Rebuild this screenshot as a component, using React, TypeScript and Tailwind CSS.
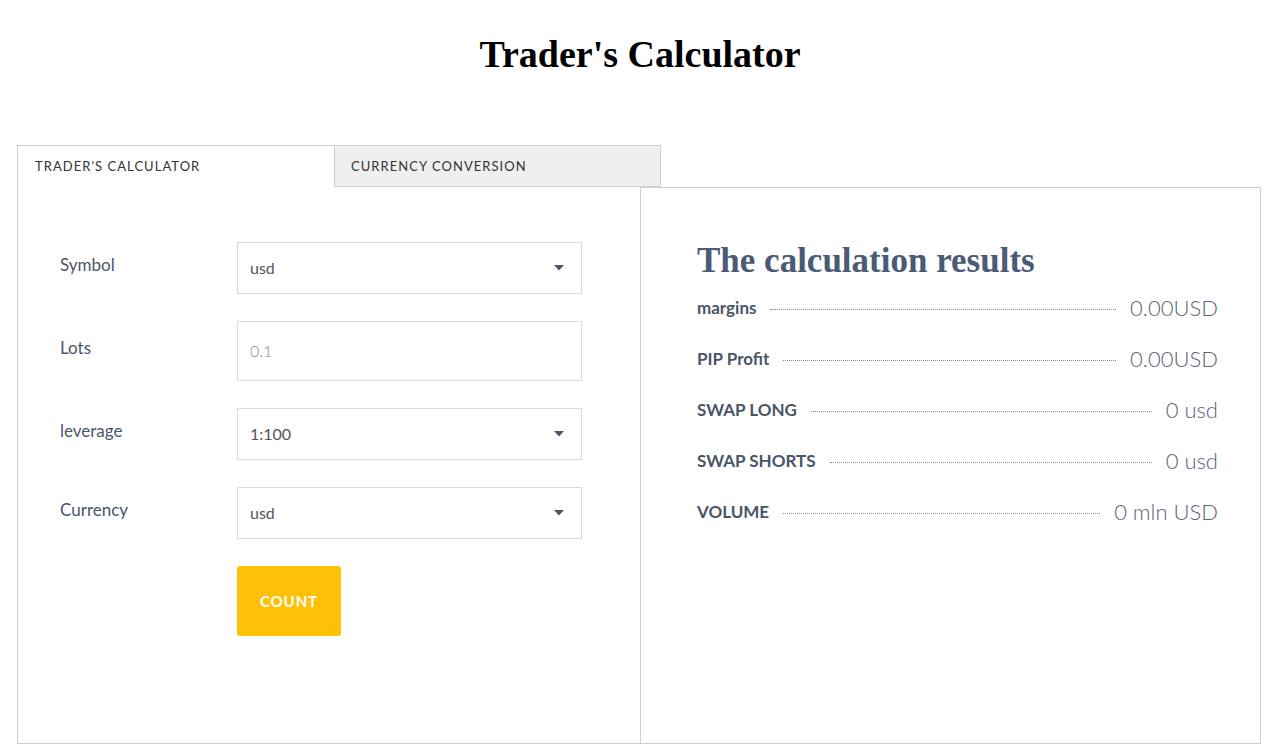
import React from "react";

const SERIF = "font-['Liberation_Serif','DejaVu_Serif',serif]";
const SANS = "font-['Lato','Noto_Sans',sans-serif]";

const FIELDS = [
  { label: "Symbol", value: "usd", kind: "select" },
  { label: "Lots", value: "0.1", kind: "input" },
  { label: "leverage", value: "1:100", kind: "select" },
  { label: "Currency", value: "usd", kind: "select" },
];

const RESULTS = [
  { label: "margins", value: "0.00USD" },
  { label: "PIP Profit", value: "0.00USD" },
  { label: "SWAP LONG", value: "0 usd" },
  { label: "SWAP SHORTS", value: "0 usd" },
  { label: "VOLUME", value: "0 mln USD" },
];

function Caret() {
  return (
    <svg width="10" height="6" viewBox="0 0 10 6" className="shrink-0">
      <path d="M0 0 L10 0 L5 5.5 Z" fill="#4a5568" />
    </svg>
  );
}

function Field({ label, value, kind }: { label: string; value: string; kind: string }) {
  return (
    <div className="flex items-center">
      <div className="w-[177px] pb-[6px] text-[17px] text-[#4a5568]">{label}</div>
      {kind === "select" ? (
        <div className="flex h-[52px] w-[345px] items-center justify-between border border-[#dadada] bg-white pl-[12px] pr-[17px]">
          <span className="text-[16px] text-[#555]">{value}</span>
          <Caret />
        </div>
      ) : (
        <div className="flex h-[60px] w-[345px] items-center border border-[#dadada] bg-white pl-[12px]">
          <span className="text-[16px] font-light text-[#8a8a8a]">{value}</span>
        </div>
      )}
    </div>
  );
}

export default function App() {
  return (
    <div className={`min-h-screen bg-white ${SANS}`}>
      <h1 className={`pl-[12px] pt-[31px] text-center text-[38px] font-bold leading-[46px] text-black ${SERIF}`}>
        Trader's Calculator
      </h1>

      <div className="mx-[17px] mt-[68px] w-[1244px]">
        {/* Tabs */}
        <div className="flex h-[42px]">
          <div className="flex w-[317px] items-center border-l border-t border-[#cfcfcf] bg-white pl-[17px] text-[13px] tracking-[0.08em] text-[#333]">
            TRADER'S CALCULATOR
          </div>
          <div className="flex w-[327px] items-center border border-[#cfcfcf] bg-[#efefef] pl-[16px] pt-[2px] text-[13px] tracking-[0.08em] text-[#333]">
            CURRENCY CONVERSION
          </div>
        </div>

        <div className="flex h-[557px]">
          {/* Form */}
          <div className="flex w-[624px] flex-col gap-[27px] border-b border-l border-r border-[#cfcfcf] pl-[42px] pt-[55px]">
            {FIELDS.map((f) => (
              <Field key={f.label} {...f} />
            ))}
            <div className="pl-[177px]">
              <button className="h-[70px] w-[104px] rounded-[3px] bg-[#ffc107] text-[15px] font-bold tracking-[0.06em] text-white">
                COUNT
              </button>
            </div>
          </div>

          {/* Results */}
          <div className="-ml-px flex-1 border-b border-r border-t border-[#cfcfcf] pl-[57px] pr-[42px] pt-[52px]">
            <h2 className={`text-[35px] font-bold leading-[42px] text-[#4b5a75] ${SERIF}`}>
              The calculation results
            </h2>
            {RESULTS.map((r) => (
              <div key={r.label} className="flex h-[51px] items-center">
                <span className="text-[17px] font-bold text-[#4a5568]">{r.label}</span>
                <span className="mx-[14px] mt-[3px] flex-1 border-b border-dotted border-[#8a8a8a]" />
                <span className="text-[22px] font-light text-[#5b6478]">{r.value}</span>
              </div>
            ))}
          </div>
        </div>
      </div>
    </div>
  );
}
